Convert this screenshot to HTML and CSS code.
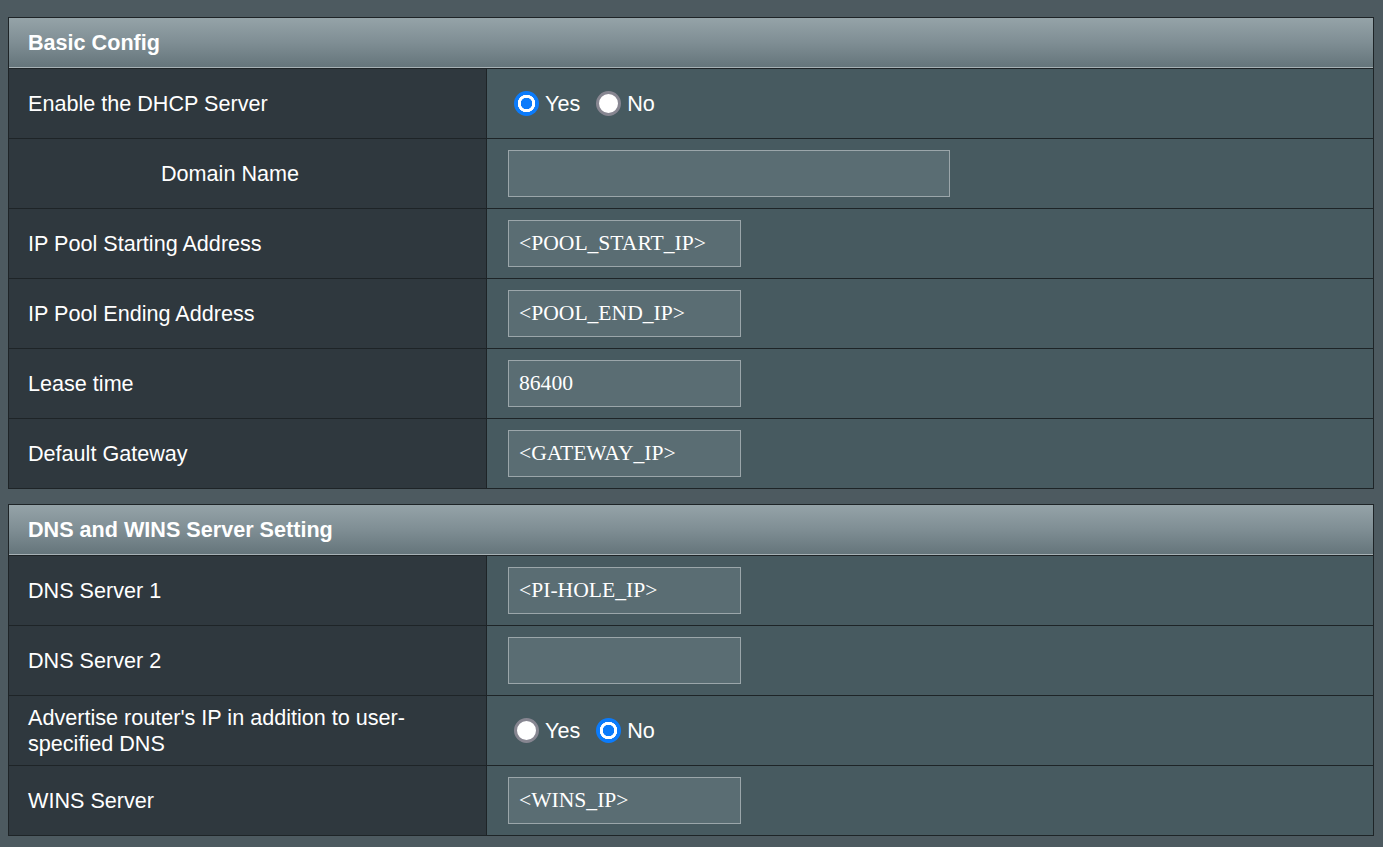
FILE: index.html
```html
<!DOCTYPE html>
<html>
<head>
<meta charset="utf-8">
<link rel="stylesheet" href="styles.css">
</head>
<body>
<div class="page">
  <section class="section">
    <div class="section-head">Basic Config</div>
    <div class="row">
      <div class="label">Enable the DHCP Server</div>
      <div class="value">
        <label class="radio"><input type="radio" name="dhcp" checked><span>Yes</span></label>
        <label class="radio"><input type="radio" name="dhcp"><span>No</span></label>
      </div>
    </div>
    <div class="row">
      <div class="label label-domain">Domain Name</div>
      <div class="value"><input class="field field-wide" type="text" value=""></div>
    </div>
    <div class="row">
      <div class="label">IP Pool Starting Address</div>
      <div class="value"><input class="field" type="text" value="<POOL_START_IP>"></div>
    </div>
    <div class="row">
      <div class="label">IP Pool Ending Address</div>
      <div class="value"><input class="field" type="text" value="<POOL_END_IP>"></div>
    </div>
    <div class="row">
      <div class="label">Lease time</div>
      <div class="value"><input class="field" type="text" value="86400"></div>
    </div>
    <div class="row">
      <div class="label">Default Gateway</div>
      <div class="value"><input class="field" type="text" value="<GATEWAY_IP>"></div>
    </div>
  </section>

  <section class="section">
    <div class="section-head">DNS and WINS Server Setting</div>
    <div class="row">
      <div class="label">DNS Server 1</div>
      <div class="value"><input class="field" type="text" value="<PI-HOLE_IP>"></div>
    </div>
    <div class="row">
      <div class="label">DNS Server 2</div>
      <div class="value"><input class="field" type="text" value=""></div>
    </div>
    <div class="row">
      <div class="label">Advertise router's IP in addition to user-specified DNS</div>
      <div class="value">
        <label class="radio"><input type="radio" name="adv"><span>Yes</span></label>
        <label class="radio"><input type="radio" name="adv" checked><span>No</span></label>
      </div>
    </div>
    <div class="row">
      <div class="label">WINS Server</div>
      <div class="value"><input class="field" type="text" value="<WINS_IP>"></div>
    </div>
  </section>
</div>
</body>
</html>
```
FILE: styles.css
```css
html, body {
  margin: 0;
  padding: 0;
  background: #4d5a60;
}
body {
  font-family: "Liberation Sans", Arial, sans-serif;
  font-size: 21.6px;
  color: #ffffff;
}
.page {
  padding: 17px 9px 0 8px;
  display: flex;
  flex-direction: column;
  gap: 15px;
  width: 1366px;
}
.section {
  border: 1px solid #1e2427;
  background: #475a60;
}
.section-head {
  box-sizing: border-box;
  border-bottom: 1px solid #a7b1b5;
  background: linear-gradient(to bottom, #95a3a8 0%, #7f8e94 50%, #65757b 100%);
  font-weight: bold;
  display: flex;
  align-items: center;
  padding-left: 19px;
  height: 50px;
}
.row {
  display: grid;
  grid-template-columns: 478px 1fr;
  border-top: 1px solid #1e2427;
  height: 70px;
  box-sizing: border-box;
}
.label {
  background: #2f383e;
  border-right: 1px solid #1e2427;
  display: flex;
  align-items: center;
  padding: 0 18px 0 19px;
  line-height: 26px;
}
.label-domain {
  padding-left: 152px;
}
.value {
  background: #475a60;
  display: flex;
  align-items: center;
  padding-left: 21px;
}
.field {
  box-sizing: border-box;
  width: 233px;
  height: 47px;
  background: #5a6d73;
  border: 1px solid #9ba6aa;
  color: #ffffff;
  font-family: "Liberation Serif", "Times New Roman", serif;
  font-size: 21.6px;
  padding: 0 10px;
  margin: 0;
  outline: none;
}
.field-wide {
  width: 442px;
}
.radio {
  display: inline-flex;
  align-items: center;
  margin-right: 10px;
}
.radio input {
  appearance: none;
  -webkit-appearance: none;
  width: 25px;
  height: 25px;
  margin: 0 6px;
  border-radius: 50%;
  box-sizing: border-box;
  background: #ffffff;
  border: 3px solid #878691;
}
.radio input:checked {
  border: none;
  background: radial-gradient(circle, #0b7bfb 0 5.5px, #ffffff 6px 8.5px, #0b7bfb 9px);
}
```
